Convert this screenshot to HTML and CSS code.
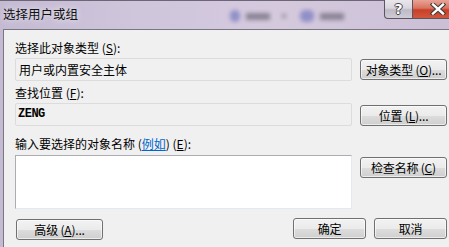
FILE: index.html
```html
<!DOCTYPE html>
<html lang="zh-CN">
<head>
<meta charset="utf-8">
<title>选择用户或组</title>
<link rel="stylesheet" href="styles.css">
</head>
<body>
<div class="window">
  <div class="titlebar">
    <span class="title">选择用户或组</span>
    <div class="ghost">
      <span class="blob blue"></span><span class="blob grey"></span>
      <span class="blob dot"></span>
      <span class="blob blue b2"></span><span class="blob grey"></span>
    </div>
    <div class="caption-btns">
      <span class="cap help">?</span>
      <span class="cap close">
        <svg width="16" height="12" viewBox="0 0 16 12"><path d="M3 1.5 L13 10.5 M13 1.5 L3 10.5" stroke="#3a3a3a" stroke-width="4.4" stroke-linecap="square"/><path d="M3 1.5 L13 10.5 M13 1.5 L3 10.5" stroke="#fff" stroke-width="2.4" stroke-linecap="square"/></svg>
      </span>
    </div>
  </div>
  <div class="client">
    <div class="label">选择此对象类型 (<u>S</u>):</div>
    <div class="row">
      <div class="field">用户或内置安全主体</div>
      <button class="btn">对象类型 (<u>O</u>)...</button>
    </div>
    <div class="label l2">查找位置 (<u>F</u>):</div>
    <div class="row">
      <div class="field mono">ZENG</div>
      <button class="btn b-mid">位置 (<u>L</u>)...</button>
    </div>
    <div class="label l3">输入要选择的对象名称 (<a class="link" href="#">例如</a>) (<u>E</u>):</div>
    <div class="row top">
      <div class="textarea"></div>
      <button class="btn b-check">检查名称 (<u>C</u>)</button>
    </div>
    <div class="footer">
      <button class="btn wide">高级 (<u>A</u>)...</button>
      <div class="spacer"></div>
      <button class="btn short">确定</button>
      <button class="btn short">取消</button>
    </div>
  </div>
</div>
</body>
</html>
```
FILE: styles.css
```css
html, body {
  margin: 0;
  padding: 0;
  width: 449px;
  height: 247px;
  overflow: hidden;
  background: #c9bfd6;
  font-family: "Noto Sans CJK SC", "Noto Sans", sans-serif;
  font-size: 12px;
  color: #000;
}
.window {
  width: 460px;
  height: 247px;
  display: flex;
  flex-direction: column;
  background: linear-gradient(90deg, #c4bbd3 0%, #cfc6dc 30%, #d5c9de 60%, #cbbfd6 100%);
}
.titlebar {
  height: 29px;
  flex: none;
  display: flex;
  align-items: flex-start;
  position: relative;
  border-top: 1px solid #6d6676;
  box-sizing: border-box;
}
.title {
  margin: 5px 0 0 3px;
  font-size: 12.5px;
  line-height: 16px;
  color: #111;
  text-shadow: 0 0 6px rgba(255,255,255,0.8);
}
.ghost {
  position: absolute;
  left: 230px;
  top: 9px;
  display: flex;
  align-items: center;
  gap: 6px;
  filter: blur(2px);
  opacity: 0.85;
}
.blob { display: block; }
.blob.blue { width: 10px; height: 12px; border-radius: 5px; background: #8586c4; }
.blob.grey { width: 24px; height: 7px; background: #7f7989; }
.blob.dot { width: 4px; height: 4px; background: #8a8494; margin: 0 6px; }
.blob.b2 { margin-left: 2px; width: 14px; }
.caption-btns {
  position: absolute;
  left: 384px;
  top: -1px;
  display: flex;
}
.cap {
  height: 19px;
  box-sizing: border-box;
  display: flex;
  align-items: center;
  justify-content: center;
  border: 1px solid #5b5560;
  border-top: none;
}
.help {
  width: 29px;
  border-bottom-left-radius: 4px;
  background: linear-gradient(#e9e7ec 0%, #d9d6de 45%, #bebac6 55%, #cfccd6 100%);
  font-family: "DejaVu Sans", sans-serif;
  font-weight: bold;
  font-size: 14px;
  line-height: 16px;
  color: #fff;
  text-shadow: 1px 0 0 #444, -1px 0 0 #444, 0 1px 0 #444, 0 -1px 0 #444;
}
.close {
  width: 50px;
  border-left: none;
  background: linear-gradient(#e8a396 0%, #d9745f 45%, #c7402a 55%, #d2563c 100%);
}
.client {
  flex: 1;
  margin-left: 3px;
  border-top: 1px solid #7a7582;
  border-left: 1px solid #7a7582;
  background: #f0f0f0;
  padding: 10px 0 0 11px;
  box-sizing: border-box;
}
.label {
  line-height: 16px;
  height: 16px;
  white-space: nowrap;
}
.label u, .btn u { text-decoration: underline; }
.l2 { margin-top: 4px; }
.l3 { margin-top: 10px; }
.link { color: #0066cc; text-decoration: underline; }
.row {
  display: grid;
  grid-template-columns: 337px 87px;
  column-gap: 8px;
  align-items: start;
  margin-top: 2px;
}
.row.top { margin-top: 3px; }
.field {
  height: 23px;
  box-sizing: border-box;
  border: 1px solid #dcdcdc;
  border-radius: 2px;
  background: #f0f0f0;
  padding: 0 3px;
  line-height: 21px;
  white-space: nowrap;
}
.mono {
  font-family: "Liberation Mono", monospace;
  font-weight: bold;
  font-size: 12px;
  padding-left: 2px;
  letter-spacing: -0.5px;
}
.textarea {
  height: 54px;
  box-sizing: border-box;
  background: #fff;
  border: 1px solid #abadb3;
  border-right-color: #e3e9ef;
  border-bottom-color: #e3e9ef;
}
.btn {
  height: 21px;
  width: 87px;
  margin-top: 1px;
  box-sizing: border-box;
  border: 1px solid #707070;
  border-radius: 3px;
  background: linear-gradient(#f2f2f2 0%, #ebebeb 50%, #dddddd 51%, #cfcfcf 100%);
  box-shadow: inset 0 0 0 1px rgba(255,255,255,0.6);
  font-family: "Noto Sans CJK SC", "Noto Sans", sans-serif;
  font-size: 12px;
  line-height: 17px;
  padding: 0;
  color: #000;
  white-space: nowrap;
  letter-spacing: -0.2px;
}
.b-mid { margin-top: 2px; }
.b-check { margin-top: 2px; }
.footer {
  display: flex;
  margin-top: 9px;
  width: 432px;
  gap: 8px;
}
.spacer { flex: 1; }
.btn.wide { margin-left: 1px; margin-top: 1px; }
.btn.short { width: 73px; margin-top: 0; }
```
